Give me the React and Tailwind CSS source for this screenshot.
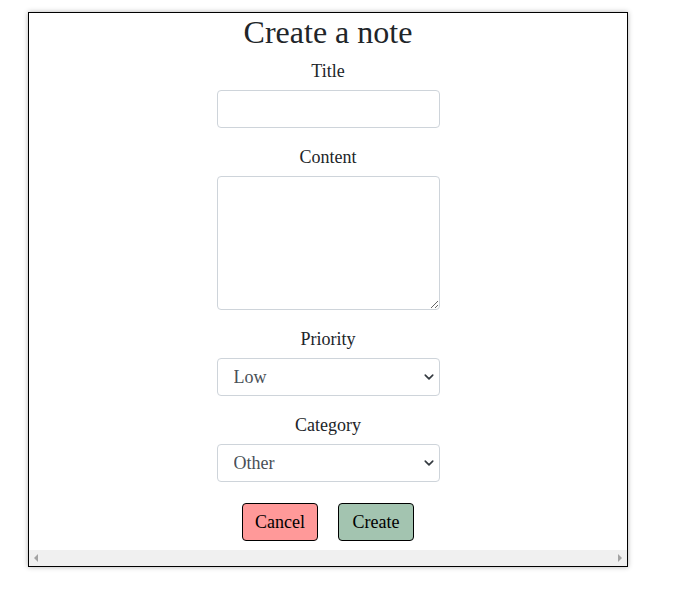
import React, { useState } from 'react'

const serif = "font-['Liberation_Serif','Times_New_Roman',serif]"

const Label = ({ children, first }) => (
  <label className={`block text-[18px] leading-6 text-[#212529] ${first ? 'mt-[8px]' : 'mt-[17px]'} mb-[7px]`}>
    {children}
  </label>
)

const Chevron = () => (
  <svg
    className="absolute right-[6px] top-1/2 -translate-y-1/2 pointer-events-none"
    width="10"
    height="10"
    viewBox="0 0 16 16"
  >
    <path d="M2 5l6 6 6-6" fill="none" stroke="#343a40" strokeWidth="2.6" strokeLinecap="round" strokeLinejoin="round" />
  </svg>
)

const SelectField = ({ value, onChange, options }) => (
  <div className="relative w-[223px] mx-auto">
    <select
      value={value}
      onChange={(e) => onChange(e.target.value)}
      className={`${serif} appearance-none w-full h-[38px] pl-[16px] pr-8 text-[18px] text-[#495057] bg-white border border-[#ced4da] rounded-[4px] outline-none`}
    >
      {options.map((o) => (
        <option key={o} value={o}>{o}</option>
      ))}
    </select>
    <Chevron />
  </div>
)

const App = () => {
  const [title, setTitle] = useState('')
  const [content, setContent] = useState('')
  const [priority, setPriority] = useState('Low')
  const [category, setCategory] = useState('Other')

  return (
    <div className={`${serif} min-h-screen bg-white pt-[12px] pl-[28px]`}>
      <div className="w-[600px] h-[555px] border border-black bg-white shadow-[0_0_5px_rgba(0,0,0,0.3)] flex flex-col">
        <div className="flex-1 text-center">
          <h1 className="text-[32px] leading-[38px] text-[#212529]">Create a note</h1>

          {/* Title */}
          <Label first>Title</Label>
          <input
            type="text"
            value={title}
            onChange={(e) => setTitle(e.target.value)}
            className="block w-[223px] h-[38px] mx-auto px-3 border border-[#ced4da] rounded-[4px] outline-none"
          />

          {/* Content */}
          <Label>Content</Label>
          <textarea
            value={content}
            onChange={(e) => setContent(e.target.value)}
            className="block w-[223px] h-[134px] mx-auto px-3 py-1.5 border border-[#ced4da] rounded-[4px] outline-none"
          />

          {/* Priority */}
          <Label>Priority</Label>
          <SelectField value={priority} onChange={setPriority} options={['Low', 'Medium', 'High']} />

          {/* Category */}
          <Label>Category</Label>
          <SelectField value={category} onChange={setCategory} options={['Work', 'Personal', 'Other']} />

          <div className="flex justify-center gap-5 mt-[21px]">
            <button className="w-[76px] h-[38px] bg-[#ff9999] border border-black rounded-[4px] text-[18px] text-black">
              Cancel
            </button>
            <button className="w-[76px] h-[38px] bg-[#a3c4b0] border border-black rounded-[4px] text-[18px] text-black">
              Create
            </button>
          </div>
        </div>

        {/* horizontal scrollbar */}
        <div className="h-[16px] bg-[#f0f0f0] flex items-center justify-between px-[5px]">
          <div className="w-0 h-0 border-y-[4px] border-y-transparent border-r-[4px] border-r-[#a3a3a3]" />
          <div className="w-0 h-0 border-y-[4px] border-y-transparent border-l-[4px] border-l-[#a3a3a3]" />
        </div>
      </div>
    </div>
  )
}

export default App
